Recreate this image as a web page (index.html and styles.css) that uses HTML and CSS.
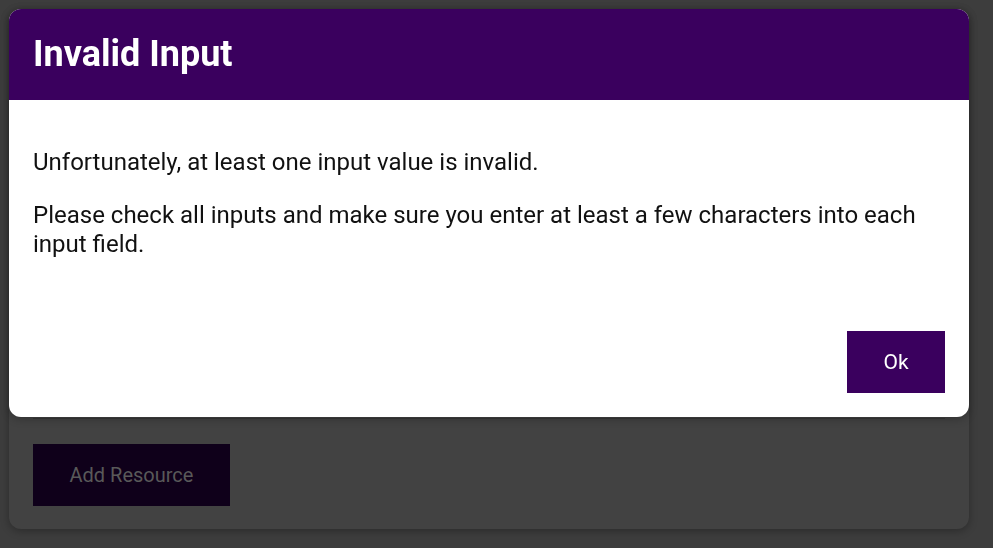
FILE: index.html
```html
<!DOCTYPE html>
<html lang="en">
<head>
<meta charset="utf-8">
<title>Invalid Input</title>
<link rel="stylesheet" href="styles.css">
</head>
<body>
<main class="page">
  <section class="card">
    <form class="form">
      <div class="fields"></div>
      <div class="actions">
        <button type="button" class="btn-add">Add Resource</button>
      </div>
    </form>
  </section>
</main>
<div class="backdrop"></div>
<div class="modal" role="dialog">
  <header class="modal-header">
    <h2>Invalid Input</h2>
  </header>
  <div class="modal-body">
    <p>Unfortunately, at least one input value is invalid.</p>
    <p>Please check all inputs and make sure you enter at least a few characters into each input field.</p>
  </div>
  <menu class="modal-actions">
    <button type="button" class="btn-ok">Ok</button>
  </menu>
</div>
</body>
</html>
```
FILE: styles.css
```css
* { box-sizing: border-box; }
html, body { margin: 0; height: 100%; }
body {
  background: #3d3d3d;
  font-family: Roboto, "Noto Sans", sans-serif;
  overflow: hidden;
}
.page { padding: 9px 24px 0 9px; }
.card {
  background: #424242;
  border-radius: 12px;
  box-shadow: 0 2px 8px rgba(0,0,0,0.3);
  height: 520px;
  padding: 0 24px 23px;
  display: flex;
  flex-direction: column;
}
.form { display: flex; flex-direction: column; height: 100%; }
.fields {
  flex: 1;
  border-bottom: 1px solid #363636;
  margin-bottom: 25px;
}
.btn-add {
  width: 197px;
  height: 62px;
  background: #0f001a;
  border: none;
  color: #595959;
  font-family: Roboto, sans-serif;
  font-size: 20px;
}
.backdrop {
  position: fixed;
  inset: 0;
  background: rgba(0,0,0,0);
}
.modal {
  position: fixed;
  top: 9px;
  left: 9px;
  width: 960px;
  height: 408px;
  background: #fff;
  border-radius: 12px;
  overflow: hidden;
  display: flex;
  flex-direction: column;
  box-shadow: 0 2px 8px rgba(0,0,0,0.26);
}
.modal-header {
  background: #3a005e;
  padding: 24px;
  height: 91px;
}
.modal-header h2 {
  margin: 0;
  color: #fff;
  font-size: 36px;
  font-weight: 700;
  line-height: 43px;
}
.modal-body {
  padding: 24px 24px 0;
  flex: 1;
  color: #111;
  font-size: 24px;
  line-height: 29px;
}
.modal-body p { margin: 24px 0; }
.modal-actions {
  margin: 0;
  padding: 0 24px 24px;
  display: flex;
  justify-content: flex-end;
}
.btn-ok {
  width: 98px;
  height: 62px;
  background: #3a005e;
  border: none;
  color: #fff;
  font-family: Roboto, sans-serif;
  font-size: 21px;
}
```
